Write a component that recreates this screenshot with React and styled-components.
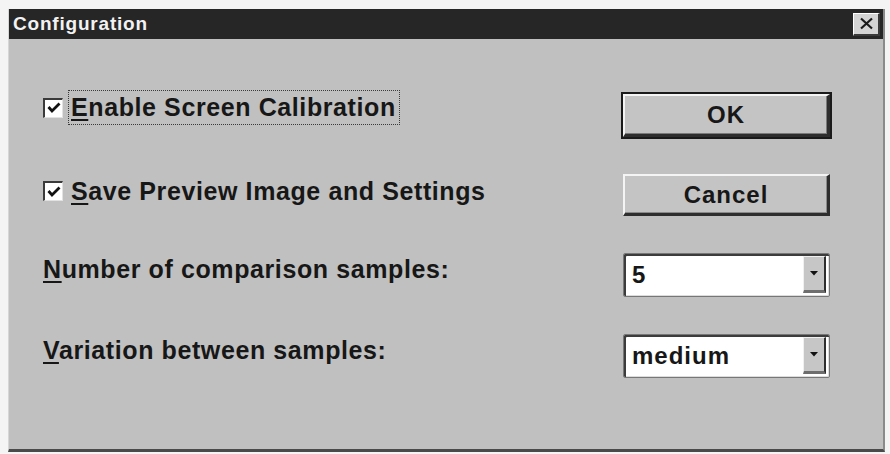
import React from "react";
import styled, { createGlobalStyle } from "styled-components";

// > 전역 스타일
const GlobalStyle = createGlobalStyle`
  html, body {
    margin: 0;
    padding: 0;
    background: #f4f4f4;
  }
  * {
    box-sizing: border-box;
  }
`;

const Frame = styled.div`
  width: 890px;
  height: 454px;
  padding: 9px 5px 2px 8px;
  background: #f4f4f4;
  font-family: "Liberation Sans", Arial, sans-serif;
  color: #171717;
`;

const Dialog = styled.div`
  height: 100%;
  display: flex;
  flex-direction: column;
  background: #c0c0c0;
  border-left: 1px solid #d6d6d6;
  border-right: 2px solid #8a8a8a;
  border-bottom: 3px solid #4a4a4a;
`;

const TitleBar = styled.div`
  height: 30px;
  flex: none;
  display: flex;
  align-items: center;
  justify-content: space-between;
  padding: 0 3px 0 4px;
  background: #262626;
`;

const Title = styled.span`
  color: #f2f2f2;
  font-size: 19px;
  font-weight: 700;
  letter-spacing: 0.8px;
`;

const CloseButton = styled.div`
  width: 27px;
  height: 23px;
  display: flex;
  align-items: center;
  justify-content: center;
  background: #d4d4d4;
  border-top: 1px solid #ffffff;
  border-left: 1px solid #ffffff;
  border-right: 2px solid #3a3a3a;
  border-bottom: 2px solid #3a3a3a;
`;

const Body = styled.div`
  flex: 1;
  display: grid;
  grid-template-columns: 1fr 207px;
  grid-template-rows: 43px 42px 44px 44px;
  row-gap: 37px;
  align-content: start;
  padding: 55px 53px 0 34px;
`;

const Cell = styled.div`
  align-self: center;
  display: flex;
  align-items: center;
  margin-bottom: ${(p) => (p.$lift || 0) * 2}px;
  font-size: 25px;
  font-weight: 700;
  letter-spacing: 0.6px;
  white-space: nowrap;
`;

const Key = styled.span`
  text-decoration: underline;
  text-decoration-thickness: 2px;
  text-underline-offset: 3px;
`;

const CheckBox = styled.div`
  width: 20px;
  height: 20px;
  flex: none;
  display: flex;
  align-items: center;
  justify-content: center;
  background: #ffffff;
  border-top: 2px solid #3a3a3a;
  border-left: 2px solid #3a3a3a;
  border-right: 1px solid #e2e2e2;
  border-bottom: 1px solid #e2e2e2;
  margin-right: ${(p) => (p.$focus ? 5 : 8)}px;
`;

const FocusBox = styled.div`
  height: 35px;
  display: flex;
  align-items: center;
  padding: 0 3px 0 2px;
  border: 1px dotted #3a3a3a;
`;

const Button = styled.div`
  height: 100%;
  display: flex;
  align-items: center;
  justify-content: center;
  font-size: 24px;
  font-weight: 700;
  letter-spacing: 1px;
  background: #c4c4c4;
  border-top: 2px solid #f4f4f4;
  border-left: 2px solid #f4f4f4;
  border-right: 3px solid #2e2e2e;
  border-bottom: 3px solid #2e2e2e;
  outline: ${(p) => (p.$default ? "2px solid #1a1a1a" : "none")};
  box-shadow: ${(p) => (p.$default ? "inset -1px -1px 0 #7a7a7a" : "inset -1px -1px 0 #8a8a8a")};
`;

const Combo = styled.div`
  height: 100%;
  display: flex;
  align-items: stretch;
  padding: 2px 3px 3px 2px;
  background: #ffffff;
  border: 1px solid #777777;
  border-radius: 2px;
  box-shadow: inset 2px 2px 0 #3c3c3c, inset -1px -1px 0 #dcdcdc;
`;

const ComboValue = styled.div`
  flex: 1;
  display: flex;
  align-items: center;
  padding-left: 6px;
  font-size: 24px;
  font-weight: 700;
  letter-spacing: 1px;
`;

const DropButton = styled.div`
  width: 23px;
  flex: none;
  display: flex;
  align-items: center;
  justify-content: center;
  background: #c6c6c6;
  border-top: 1px solid #f0f0f0;
  border-left: 1px solid #f0f0f0;
  border-right: 2px solid #2e2e2e;
  border-bottom: 3px solid #6e6e6e;
`;

function Check() {
  return (
    <svg width="14" height="12" viewBox="0 0 14 12">
      <path d="M1.5 5 L5 9 L12.5 1.5" fill="none" stroke="#111" strokeWidth="2.8" />
    </svg>
  );
}

function Cross() {
  return (
    <svg width="15" height="13" viewBox="0 0 15 13">
      <path d="M2 1.5 L13 11.5 M13 1.5 L2 11.5" stroke="#1a1a1a" strokeWidth="2.2" />
    </svg>
  );
}

function Arrow() {
  return (
    <svg width="8" height="5" viewBox="0 0 8 5">
      <path d="M0 0 H8 L4 4.5 Z" fill="#111" />
    </svg>
  );
}

function App() {
  return (
    <>
      <GlobalStyle />
      <Frame>
        <Dialog>
          <TitleBar>
            <Title>Configuration</Title>
            <CloseButton>
              <Cross />
            </CloseButton>
          </TitleBar>
          <Body>
            <Cell $lift={8}>
              <CheckBox $focus>
                <Check />
              </CheckBox>
              <FocusBox>
                <Key>E</Key>nable Screen Calibration
              </FocusBox>
            </Cell>
            <Button $default>OK</Button>

            <Cell $lift={4}>
              <CheckBox>
                <Check />
              </CheckBox>
              <span>
                <Key>S</Key>ave Preview Image and Settings
              </span>
            </Cell>
            <Button>Cancel</Button>

            <Cell $lift={6}>
              <span>
                <Key>N</Key>umber of comparison samples:
              </span>
            </Cell>
            <Combo>
              <ComboValue>5</ComboValue>
              <DropButton>
                <Arrow />
              </DropButton>
            </Combo>

            <Cell $lift={6}>
              <span>
                <Key>V</Key>ariation between samples:
              </span>
            </Cell>
            <Combo>
              <ComboValue>medium</ComboValue>
              <DropButton>
                <Arrow />
              </DropButton>
            </Combo>
          </Body>
        </Dialog>
      </Frame>
    </>
  );
}

export default App;
